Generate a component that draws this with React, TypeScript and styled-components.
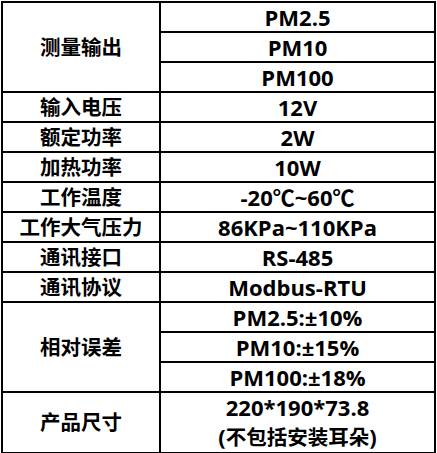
import React from 'react';
import styled, { createGlobalStyle } from 'styled-components';

const GlobalStyle = createGlobalStyle`
  html, body {
    margin: 0;
    padding: 0;
    background: #fff;
  }
`;

type Row = { label?: string; span?: number; value: React.ReactNode; tall?: boolean };

const Han = styled.span`
  font-size: 20.5px;
`;

const rows: Row[] = [
  { label: '测量输出', span: 3, value: 'PM2.5' },
  { value: 'PM10' },
  { value: 'PM100' },
  { label: '输入电压', value: '12V' },
  { label: '额定功率', value: '2W' },
  { label: '加热功率', value: '10W' },
  { label: '工作温度', value: '-20℃~60℃' },
  { label: '工作大气压力', value: '86KPa~110KPa' },
  { label: '通讯接口', value: 'RS-485' },
  { label: '通讯协议', value: 'Modbus-RTU' },
  { label: '相对误差', span: 3, value: 'PM2.5:±10%' },
  { value: 'PM10:±15%' },
  { value: 'PM100:±18%' },
  {
    label: '产品尺寸',
    tall: true,
    value: (
      <>
        220*190*73.8
        <br />
        (<Han>不包括安装耳朵</Han>)
      </>
    ),
  },
];

const Page = styled.div`
  padding: 1px 0 0 1px;
`;

const SpecTable = styled.table`
  border-collapse: collapse;
  width: 435px;
  table-layout: fixed;
  font-family: 'Open Sans', 'Noto Sans CJK SC', sans-serif;
  font-weight: 700;
  color: #000;
`;

const Cell = styled.td<{ $tall?: boolean; $label?: boolean }>`
  border: 2px solid #000;
  padding: 0;
  height: ${(p) => (p.$tall ? 58 : 28)}px;
  line-height: ${(p) => (p.$tall ? 29 : 28)}px;
  font-size: ${(p) => (p.$label ? 20.5 : 22)}px;
  text-align: center;
  vertical-align: middle;
  white-space: nowrap;
`;

const LabelCol = styled.col`
  width: 158px;
`;

export default function App() {
  return (
    <Page>
      <GlobalStyle />
      <SpecTable>
        <colgroup>
          <LabelCol />
          <col />
        </colgroup>
        <tbody>
          {rows.map((r, i) => (
            <tr key={i}>
              {r.label && (
                <Cell rowSpan={r.span} $label $tall={r.tall && !r.span}>
                  {r.label}
                </Cell>
              )}
              <Cell $tall={r.tall}>{r.value}</Cell>
            </tr>
          ))}
        </tbody>
      </SpecTable>
    </Page>
  );
}
